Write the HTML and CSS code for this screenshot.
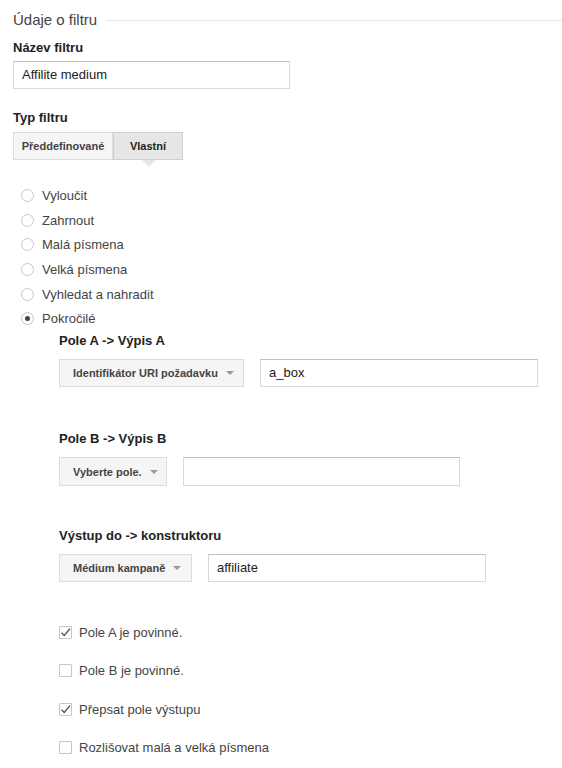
FILE: index.html
```html
<!DOCTYPE html>
<html lang="cs">
<head>
<meta charset="utf-8">
<link rel="stylesheet" href="styles.css">
</head>
<body>
<div class="page">
  <div class="legend"><span class="legend-text">Údaje o filtru</span><span class="legend-line"></span></div>

  <div class="label first">Název filtru</div>
  <div class="input name-input">Affilite medium</div>

  <div class="label type-label">Typ filtru</div>
  <div class="seg">
    <div class="seg-btn">Předdefinované</div>
    <div class="seg-btn active">Vlastní<span class="pointer"></span></div>
  </div>

  <div class="radios">
    <div class="radio-row"><span class="radio"></span>Vyloučit</div>
    <div class="radio-row"><span class="radio"></span>Zahrnout</div>
    <div class="radio-row"><span class="radio"></span>Malá písmena</div>
    <div class="radio-row"><span class="radio"></span>Velká písmena</div>
    <div class="radio-row"><span class="radio"></span>Vyhledat a nahradit</div>
    <div class="radio-row"><span class="radio checked"></span>Pokročilé</div>
  </div>

  <div class="advanced">
    <div class="adv-section">
      <div class="label">Pole A -&gt; Výpis A</div>
      <div class="field-row">
        <div class="dropdown w-a"><span class="dd-text">Identifikátor URI požadavku</span><span class="caret"></span></div>
        <div class="input w-a-in">a_box</div>
      </div>
    </div>
    <div class="adv-section sec-b">
      <div class="label">Pole B -&gt; Výpis B</div>
      <div class="field-row">
        <div class="dropdown w-b"><span class="dd-text">Vyberte pole.</span><span class="caret"></span></div>
        <div class="input w-b-in"></div>
      </div>
    </div>
    <div class="adv-section sec-c">
      <div class="label">Výstup do -&gt; konstruktoru</div>
      <div class="field-row">
        <div class="dropdown w-c"><span class="dd-text">Médium kampaně</span><span class="caret"></span></div>
        <div class="input w-c-in">affiliate</div>
      </div>
    </div>

    <div class="checks">
      <div class="check-row"><span class="checkbox"><svg width="13" height="13" viewBox="0 0 13 13"><path d="M2.5 6.8 L5.2 9.4 L11 2.6" fill="none" stroke="#555" stroke-width="1.4"/></svg></span>Pole A je povinné.</div>
      <div class="check-row"><span class="checkbox"></span>Pole B je povinné.</div>
      <div class="check-row"><span class="checkbox"><svg width="13" height="13" viewBox="0 0 13 13"><path d="M2.5 6.8 L5.2 9.4 L11 2.6" fill="none" stroke="#555" stroke-width="1.4"/></svg></span>Přepsat pole výstupu</div>
      <div class="check-row"><span class="checkbox"></span>Rozlišovat malá a velká písmena</div>
    </div>
  </div>
</div>
</body>
</html>
```

FILE: styles.css
```css
* { box-sizing: border-box; }
html, body { margin: 0; padding: 0; background: #fff; }
body {
  font-family: "Liberation Sans", Arial, sans-serif;
  font-size: 13px;
  color: #444;
}
.page { padding-left: 13px; }

.legend {
  height: 40px;
  display: flex;
  align-items: center;
}
.legend-text { font-size: 15px; color: #444; line-height: 18px; }
.legend-line {
  flex: 1;
  height: 1px;
  background: #e5e5e5;
  margin-left: 9px;
  margin-top: 1px;
}

.label {
  font-weight: bold;
  color: #222;
  font-size: 13px;
  line-height: 16px;
}

.input {
  height: 28px;
  border: 1px solid #d9d9d9;
  border-top-color: #c0c0c0;
  background: #fff;
  color: #222;
  font-size: 13px;
  line-height: 26px;
  padding-left: 8px;
}
.name-input { width: 277px; margin-top: 5px; }

.type-label { margin-top: 21px; }

.seg {
  display: flex;
  margin-top: 6px;
  width: 170px;
}
.seg-btn {
  position: relative;
  height: 28px;
  border: 1px solid #dcdcdc;
  background: #f5f5f5;
  font-weight: bold;
  font-size: 11px;
  color: #444;
  line-height: 26px;
  text-align: center;
  width: 100px;
}
.seg-btn.active {
  width: 70px;
  background: #e6e6e6;
  border-color: #cfcfcf;
  color: #222;
}
.pointer {
  position: absolute;
  left: 28px;
  top: 27px;
  width: 0;
  height: 0;
  border-left: 7px solid transparent;
  border-right: 7px solid transparent;
  border-top: 7px solid #e6e6e6;
}
.pointer::before {
  content: "";
  position: absolute;
  left: -8px;
  top: -7px;
  border-left: 8px solid transparent;
  border-right: 8px solid transparent;
  border-top: 8px solid #d4d4d4;
  z-index: -1;
}

.radios {
  margin-top: 23px;
  padding-left: 8px;
}
.radio-row {
  height: 24.7px;
  display: flex;
  align-items: center;
  color: #444;
}
.radio {
  width: 13px;
  height: 13px;
  border: 1px solid #c6c6c6;
  border-radius: 50%;
  background: #fff;
  margin-right: 8px;
  display: flex;
  align-items: center;
  justify-content: center;
}
.radio.checked::after {
  content: "";
  width: 5px;
  height: 5px;
  border-radius: 50%;
  background: #444;
}

.advanced { padding-left: 46px; }
.adv-section { margin-top: 2px; }
.sec-b { margin-top: 44px; }
.sec-c { margin-top: 42px; }

.field-row {
  display: flex;
  gap: 16px;
  margin-top: 10px;
}
.dropdown {
  height: 28px;
  border: 1px solid #dcdcdc;
  background: #f5f5f5;
  font-weight: bold;
  font-size: 11px;
  color: #444;
  padding-left: 13px;
  padding-right: 10px;
  display: flex;
  align-items: center;
  justify-content: space-between;
  white-space: nowrap;
}
.dd-text { white-space: nowrap; }
.caret {
  flex-shrink: 0;
  width: 0;
  height: 0;
  border-left: 4px solid transparent;
  border-right: 4px solid transparent;
  border-top: 4px solid #999;
  margin-left: 8px;
}
.w-a { width: 185px; }
.w-a-in { width: 278px; }
.w-b { width: 108px; height: 29px; }
.w-b-in { width: 277px; height: 29px; }
.w-c { width: 133px; }
.w-c-in { width: 278px; }

.checks { margin-top: 31px; }
.check-row {
  height: 38.5px;
  display: flex;
  align-items: center;
  color: #444;
}
.checkbox {
  width: 13px;
  height: 13px;
  border: 1px solid #c6c6c6;
  border-radius: 1px;
  background: #fff;
  margin-right: 7px;
  position: relative;
}
.checkbox svg {
  position: absolute;
  left: -1px;
  top: -1px;
}
```
